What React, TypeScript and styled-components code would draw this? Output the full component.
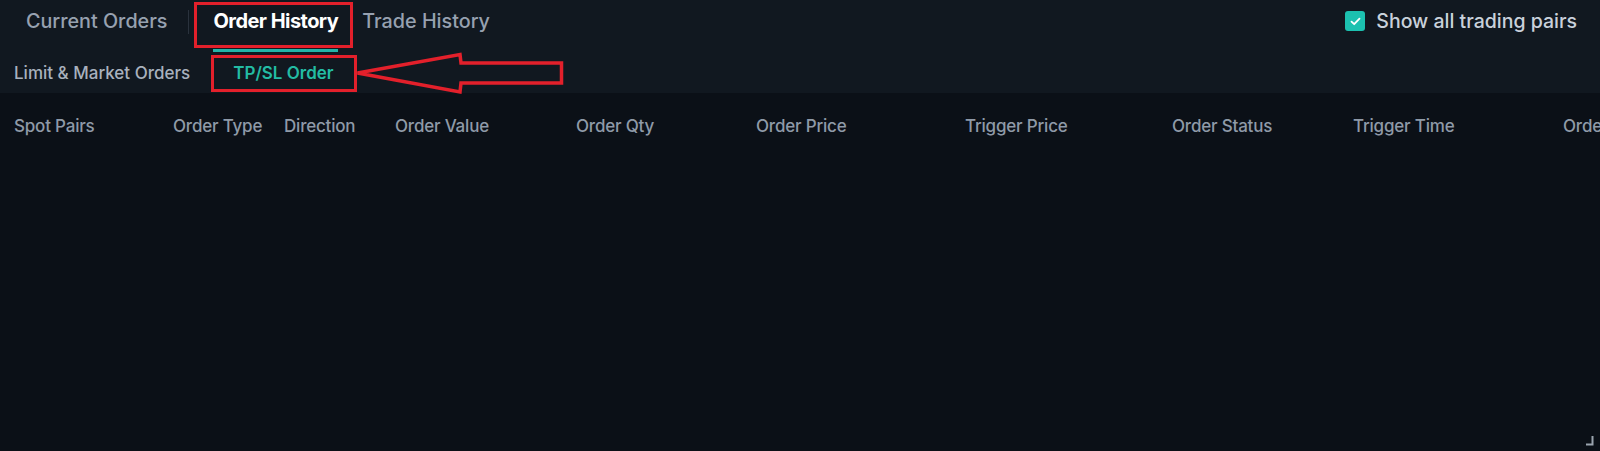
import React from "react";
import styled, { createGlobalStyle } from "styled-components";

const Global = createGlobalStyle`
  html, body { margin: 0; padding: 0; background: #0b1017; }
  body { font-family: Inter, "Noto Sans", sans-serif; }
  * { box-sizing: border-box; }
`;

const Page = styled.div`
  position: relative;
  width: 1600px;
  height: 451px;
  display: flex;
  flex-direction: column;
  background: #0b1017;
  overflow: hidden;
`;

const TopBar = styled.div`
  background: #111820;
  display: flex;
  flex-direction: column;
`;

const TabRow = styled.div`
  display: flex;
  align-items: flex-start;
  height: 52px;
  padding: 0 23px 0 26px;
`;

const Tab = styled.div<{ $active?: boolean; $marked?: boolean }>`
  position: relative;
  font-size: ${(p) => (p.$active ? "20px" : "19.75px")};
  line-height: 42px;
  letter-spacing: ${(p) => (p.$active ? "-0.55px" : "0")};
  font-weight: ${(p) => (p.$active ? 700 : 500)};
  color: ${(p) => (p.$active ? "#ffffff" : "#97a1b0")};
  padding-bottom: 7px;
  border-bottom: 3px solid ${(p) => (p.$active ? "#22b4a8" : "transparent")};
  ${(p) =>
    p.$marked &&
    `&::after {
      content: "";
      position: absolute;
      left: -19px;
      right: -15px;
      top: 2px;
      height: 40px;
      border: 3px solid #e3202b;
    }`}
`;

const Divider = styled.div`
  width: 1px;
  height: 24px;
  margin: 10px 24px 0 21px;
  background: #2a323d;
`;

const TabGap = styled.div`
  width: 24px;
`;

const Spacer = styled.div`
  flex: 1;
`;

const CheckWrap = styled.label`
  display: flex;
  align-items: center;
  gap: 11px;
  height: 42px;
  color: #c9d1db;
  font-size: 19.5px;
  font-weight: 500;
`;

const CheckBox = styled.span`
  width: 20px;
  height: 20px;
  border-radius: 3px;
  background: #1cc1b0;
  display: flex;
  align-items: center;
  justify-content: center;
`;

const SubRow = styled.div`
  display: flex;
  align-items: center;
  height: 41px;
  padding-left: 14px;
  gap: 43px;
`;

const SubTab = styled.div<{ $active?: boolean; $marked?: boolean }>`
  position: relative;
  font-size: 17px;
  line-height: 20px;
  font-weight: ${(p) => (p.$active ? 600 : 500)};
  color: ${(p) => (p.$active ? "#23bca4" : "#a8b1bd")};
  ${(p) =>
    p.$marked &&
    `&::after {
      content: "";
      position: absolute;
      left: -22px;
      right: -23px;
      top: -8px;
      bottom: -9px;
      border: 3px solid #e3202b;
    }`}
`;

const HeaderRow = styled.div`
  display: grid;
  grid-template-columns: 159px 111px 111px 181px 180px 209px 207px 181px 210px 100px;
  align-items: center;
  height: 66px;
  padding-left: 14px;
`;

const HeaderCell = styled.div`
  font-size: 17px;
  font-weight: 500;
  color: #8f9aa8;
  white-space: nowrap;
  letter-spacing: -0.2px;
`;

const Body = styled.div`
  flex: 1;
`;

const Footer = styled.div`
  display: flex;
  justify-content: flex-end;
  padding: 0 5px 4px 0;
`;

const Arrow = styled.svg`
  position: absolute;
  left: 350px;
  top: 48px;
`;

const columns = [
  "Spot Pairs",
  "Order Type",
  "Direction",
  "Order Value",
  "Order Qty",
  "Order Price",
  "Trigger Price",
  "Order Status",
  "Trigger Time",
  "Order Time",
];

export default function App() {
  return (
    <Page>
      <Global />
      <TopBar>
        <TabRow>
          <Tab>Current Orders</Tab>
          <Divider />
          <Tab $active $marked>
            Order History
          </Tab>
          <TabGap />
          <Tab>Trade History</Tab>
          <Spacer />
          <CheckWrap>
            <CheckBox>
              <svg width="11" height="9" viewBox="0 0 11 9">
                <path
                  d="M1.5 4.6 L4.2 7.2 L9.5 1.6"
                  fill="none"
                  stroke="#ffffff"
                  strokeWidth="1.8"
                  strokeLinecap="round"
                  strokeLinejoin="round"
                />
              </svg>
            </CheckBox>
            Show all trading pairs
          </CheckWrap>
        </TabRow>
        <SubRow>
          <SubTab>Limit &amp; Market Orders</SubTab>
          <SubTab $active $marked>
            TP/SL Order
          </SubTab>
        </SubRow>
      </TopBar>
      <HeaderRow>
        {columns.map((c) => (
          <HeaderCell key={c}>{c}</HeaderCell>
        ))}
      </HeaderRow>
      <Body />
      <Footer>
        <svg width="10" height="12" viewBox="0 0 10 12">
          <path d="M7.5 1 V9.5 H1" fill="none" stroke="#9aa3ae" strokeWidth="2" />
        </svg>
      </Footer>
      <Arrow width="220" height="52" viewBox="0 0 220 52">
        <path
          d="M7.5 25 L110 6.5 L111 15 L211.5 15 L211.5 35 L111 35 L110 44 Z"
          fill="none"
          stroke="#e3202b"
          strokeWidth="3.5"
          strokeLinejoin="miter"
        />
      </Arrow>
    </Page>
  );
}
